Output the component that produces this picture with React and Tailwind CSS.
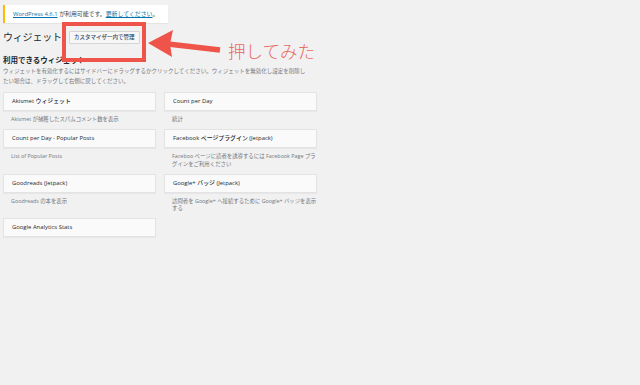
import React from "react";

const FONT = { fontFamily: '"Open Sans", "Noto Sans CJK JP", sans-serif' };

const rows = [
	[
		{ title: "Akismet ウィジェット", desc: ["Akismet が捕獲したスパムコメント数を表示"] },
		{ title: "Count per Day", desc: ["統計"] },
	],
	[
		{ title: "Count per Day - Popular Posts", desc: ["List of Popular Posts"] },
		{ title: "Facebook ページプラグイン (Jetpack)", desc: ["Faceboo ページに読者を誘導するには Facebook Page プラ", "グインをご利用ください"] },
	],
	[
		{ title: "Goodreads (Jetpack)", desc: ["Goodreads の本を表示"] },
		{ title: "Google+ バッジ (Jetpack)", desc: ["訪問者を Google+ へ接続するために Google+ バッジを表示", "する"] },
	],
	[
		{ title: "Google Analytics Stats", desc: [] },
		null,
	],
];

function WidgetItem({ item }) {
	if (!item) return <div />;
	return <div>
		<div className="h-[19px] flex items-center px-[8px] bg-[#fafafa] border border-[#e3e3e3] shadow-[0_1px_1px_rgba(0,0,0,0.04)]">
			<span className="text-[5.9px] font-medium text-[#23282d]">{item.title}</span>
		</div>
		{item.desc.length > 0 &&
			<div className="pt-[5px] pb-[5.5px] pl-[8px] text-[5.4px] leading-[7.5px] text-[#72777c] whitespace-nowrap">
				{item.desc.map((d, i) => <div key={i}>{d}</div>)}
			</div>
		}
	</div>
}

export default function App() {
	return <div className="relative w-[640px] h-[385px] bg-[#f1f1f1] overflow-hidden pl-[3px]" style={FONT}>
		<div className="pt-[5px]">
			<div className="w-[165px] h-[18px] flex items-center pl-[8px] bg-white border-l-2 border-[#ffb900] shadow-[0_1px_1px_rgba(0,0,0,0.05)] text-[5.9px] text-[#444]">
				<span><span className="text-[#0073aa] underline">WordPress 4.6.1</span> が利用可能です。<span className="text-[#0073aa] underline">更新してください</span>。</span>
			</div>
		</div>

		<div className="flex items-center mt-[7px] h-[14px]">
			<h1 className="text-[10px] leading-[14px] text-[#23282d] tracking-[-0.2px]">ウィジェット</h1>
			<div className="ml-[7px] h-[13px] w-[71px] flex items-center justify-center bg-[#f7f7f7] border border-[#d5d5d5] rounded-[1px] text-[5.5px] font-medium text-[#1f4a6e]">
				カスタマイザー内で管理
			</div>
		</div>

		<h2 className="mt-[11px] text-[7.5px] leading-[10px] font-bold text-[#23282d]">利用できるウィジェット</h2>
		<p className="mt-[1px] text-[5.5px] leading-[10px] text-[#72777c] w-[315px]">
			ウィジェットを有効化するにはサイドバーにドラッグするかクリックしてください。ウィジェットを無効化し設定を削除し<br />たい場合は、ドラッグして右側に戻してください。
		</p>

		<div className="mt-[6px] grid grid-cols-[153px_153px] gap-x-[8px] w-[314px]">
			{rows.map((r, i) => <React.Fragment key={i}>
				<WidgetItem item={r[0]} />
				<WidgetItem item={r[1]} />
			</React.Fragment>)}
		</div>

		<div className="absolute left-[62px] top-[22px] w-[84px] h-[40px] border-[4px] border-[#ee5449]" />
		<svg className="absolute left-[140px] top-[24px]" width="90" height="40" viewBox="0 0 90 40">
			<line x1="28" y1="20" x2="80" y2="26" stroke="#ee5449" strokeWidth="5.5" />
			<polygon points="8,19 33,6 30,20 32,33" fill="#ee5449" />
		</svg>
		<div className="absolute left-[228px] top-[42px] text-[17.5px] leading-[18px] font-light text-[#eb675e]">押してみた</div>
	</div>
}
